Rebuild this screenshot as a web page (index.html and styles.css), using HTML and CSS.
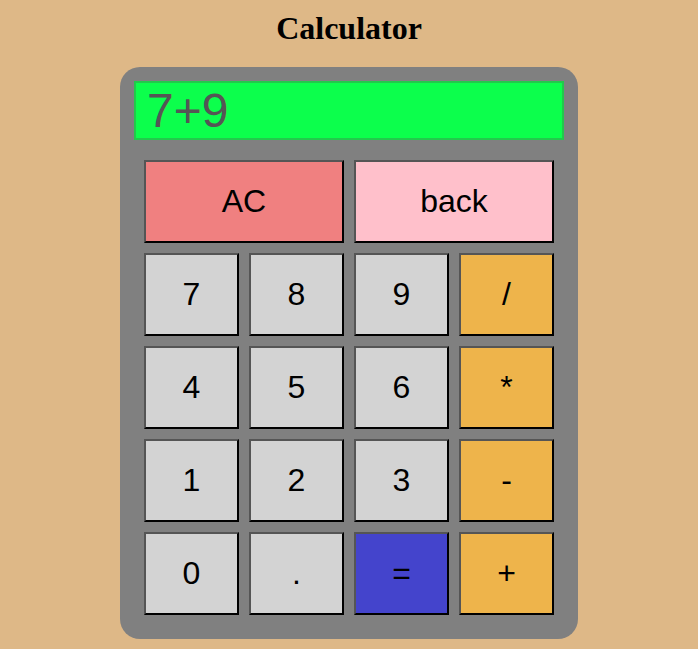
FILE: index.html
```html
<!DOCTYPE html>
<html>
<head>
<meta charset="utf-8">
<title>Calculator</title>
<link rel="stylesheet" href="styles.css">
</head>
<body>
<h1 class="title">Calculator</h1>
<div class="calc">
  <div class="display">7+9</div>
  <div class="keys">
    <button class="key wide ac">AC</button>
    <button class="key wide back">back</button>
    <button class="key">7</button>
    <button class="key">8</button>
    <button class="key">9</button>
    <button class="key op">/</button>
    <button class="key">4</button>
    <button class="key">5</button>
    <button class="key">6</button>
    <button class="key op">*</button>
    <button class="key">1</button>
    <button class="key">2</button>
    <button class="key">3</button>
    <button class="key op">-</button>
    <button class="key">0</button>
    <button class="key">.</button>
    <button class="key eq">=</button>
    <button class="key op">+</button>
  </div>
</div>
</body>
</html>
```
FILE: styles.css
```css
html, body {
  margin: 0;
  padding: 0;
  background: #deb887;
}
.title {
  margin: 10px 0 20px;
  font-family: "Liberation Serif", serif;
  font-size: 32px;
  font-weight: bold;
  text-align: center;
  line-height: 37px;
  color: #000;
}
.calc {
  width: 458px;
  box-sizing: border-box;
  margin: 0 auto;
  background: #808080;
  border-radius: 20px;
  padding: 14px 14px 24px;
}
.display {
  box-sizing: border-box;
  height: 59px;
  background: #0cff4c;
  border: 2px solid #22c94c;
  color: #555;
  font-family: "Liberation Sans", Arial, sans-serif;
  font-size: 48px;
  line-height: 55px;
  padding: 0 11px;
}
.keys {
  display: grid;
  grid-template-columns: repeat(4, 95px);
  grid-auto-rows: 83px;
  gap: 10px;
  padding: 20px 10px 0;
}
.key {
  box-sizing: border-box;
  margin: 0;
  padding: 0;
  background: #d3d3d3;
  border: 2px solid;
  border-color: #555 #000 #000 #555;
  font-family: "Liberation Sans", Arial, sans-serif;
  font-size: 32px;
  color: #000;
}
.wide { grid-column: span 2; }
.ac { background: #f08080; }
.back { background: #ffc0cb; }
.op { background: #eeb44b; }
.eq { background: #4444cc; }
```
